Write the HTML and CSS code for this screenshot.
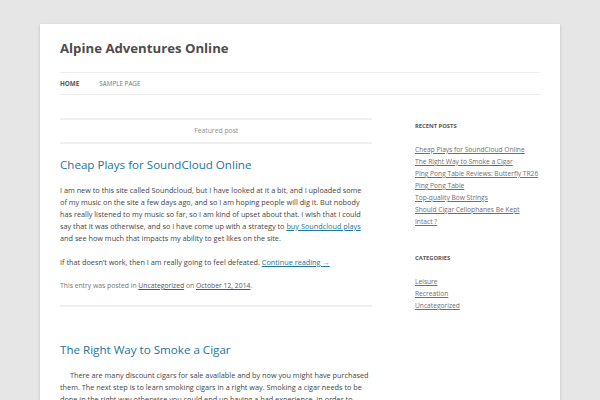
FILE: index.html
```
<!DOCTYPE html>
<html lang="en">
  <head>
    <meta charset="UTF-8" />
    <title>Alpine Adventures Online</title>
    <link rel="stylesheet" href="styles.css">
  </head>
  <body>
    <div class="site">
      <header class="site-header">
        <h1 class="site-title"><a href="#">Alpine Adventures Online</a></h1>
        <nav class="main-navigation">
          <ul class="nav-menu">
            <li class="current"><a href="#">Home</a></li>
            <li><a href="#">Sample Page</a></li>
          </ul>
        </nav>
      </header>

      <div class="main">
        <div class="site-content">
          <article class="post sticky">
            <div class="featured-post">Featured post</div>
            <header class="entry-header">
              <h2 class="entry-title"><a href="#">Cheap Plays for SoundCloud Online</a></h2>
            </header>
            <div class="entry-content">
              <p>I am new to this site called Soundcloud, but I have looked at it a bit, and I uploaded some<br>
                of my music on the site a few days ago, and so I am hoping people will dig it. But nobody<br>
                has really listened to my music so far, so I am kind of upset about that. I wish that I could<br>
                say that it was otherwise, and so I have come up with a strategy to <a href="#">buy Soundcloud plays</a><br>
                and see how much that impacts my ability to get likes on the site.</p>
              <p>If that doesn’t work, then I am really going to feel defeated. <a href="#">Continue reading <span>→</span></a></p>
            </div>
            <footer class="entry-meta">
              This entry was posted in <a href="#">Uncategorized</a> on <a href="#">October 12, 2014</a>.
            </footer>
          </article>

          <article class="post">
            <header class="entry-header">
              <h2 class="entry-title"><a href="#">The Right Way to Smoke a Cigar</a></h2>
            </header>
            <div class="entry-content">
              <p class="indent">There are many discount cigars for sale available and by now you might have purchased<br>
                them. The next step is to learn smoking cigars in a right way. Smoking a cigar needs to be<br>
                done in the right way otherwise you could end up having a bad experience. In order to<br>
                enjoy a good cigar you need to cut it properly and light it evenly before you start.</p>
            </div>
          </article>
        </div>

        <aside class="widget-area">
          <div class="widget">
            <h3 class="widget-title">Recent Posts</h3>
            <ul>
              <li><a href="#">Cheap Plays for SoundCloud Online</a></li>
              <li><a href="#">The Right Way to Smoke a Cigar</a></li>
              <li><a href="#">Ping Pong Table Reviews: Butterfly TR26</a></li>
              <li><a href="#">Ping Pong Table</a></li>
              <li><a href="#">Top-quality Bow Strings</a></li>
              <li><a href="#">Should Cigar Cellophanes Be Kept<br>Intact ?</a></li>
            </ul>
          </div>
          <div class="widget">
            <h3 class="widget-title">Categories</h3>
            <ul>
              <li><a href="#">Leisure</a></li>
              <li><a href="#">Recreation</a></li>
              <li><a href="#">Uncategorized</a></li>
            </ul>
          </div>
        </aside>
      </div>
    </div>
  </body>
</html>
```

FILE: styles.css
```
html {
  height: 100%;
}
body {
  margin: 0;
  background: #e6e6e6;
  font-family: "Open Sans", "Liberation Sans", sans-serif;
  font-size: 7.3px;
  line-height: 12px;
  color: #444;
}
a {
  color: #21759b;
}
ul {
  margin: 0;
  padding: 0;
  list-style: none;
}
h1, h2, h3, p {
  margin: 0;
}

.site {
  margin: 24px 40px 0;
  padding: 0 20px;
  min-height: 400px;
  background: #fff;
  box-shadow: 0 1px 3px rgba(100, 100, 100, 0.3);
}

.site-header {
  padding: 12px 0;
}
.site-title {
  font-size: 13.2px;
  line-height: 20px;
  margin-bottom: 7px;
  padding-top: 2px;
}
.site-title a {
  color: #4d4d4d;
  text-decoration: none;
}

.main-navigation {
  margin-top: 14px;
}
.nav-menu {
  display: flex;
  gap: 20px;
  border-top: 1px solid #ededed;
  border-bottom: 1px solid #ededed;
}
.nav-menu a {
  display: block;
  font-size: 6.3px;
  line-height: 21px;
  text-transform: uppercase;
  text-decoration: none;
  color: #757575;
}
.nav-menu .current a {
  color: #555;
  font-weight: bold;
}

.main {
  display: flex;
  justify-content: space-between;
  padding-top: 11px;
}
.site-content {
  width: 65.104%;
}
.widget-area {
  width: 26.041%;
  padding-top: 2px;
}

.post {
  border-bottom: 2px solid #eeeeee;
  margin-bottom: 37px;
  padding-bottom: 13px;
}
.featured-post {
  border-top: 2px solid #eeeeee;
  border-bottom: 2px solid #eeeeee;
  margin-bottom: 15px;
  text-align: center;
  font-size: 6.8px;
  line-height: 22px;
  color: #8f8f8f;
}
.entry-header {
  margin-bottom: 13px;
}
.entry-title {
  font-size: 11.6px;
  line-height: 12px;
  font-weight: normal;
}
.entry-title a {
  text-decoration: none;
}
.entry-content p {
  margin-bottom: 12px;
  white-space: nowrap;
}
.entry-content .indent {
  text-indent: 10px;
}
.entry-meta {
  font-size: 6.8px;
  line-height: 12px;
  color: #757575;
}
.entry-meta a {
  color: #555;
}

.widget {
  margin-bottom: 24px;
  font-size: 6.65px;
  line-height: 12px;
}
.widget-title {
  font-size: 5.8px;
  line-height: 12px;
  font-weight: bold;
  text-transform: uppercase;
  color: #555;
  margin-bottom: 12px;
}
.widget a {
  color: #6f6f6f;
}
```
